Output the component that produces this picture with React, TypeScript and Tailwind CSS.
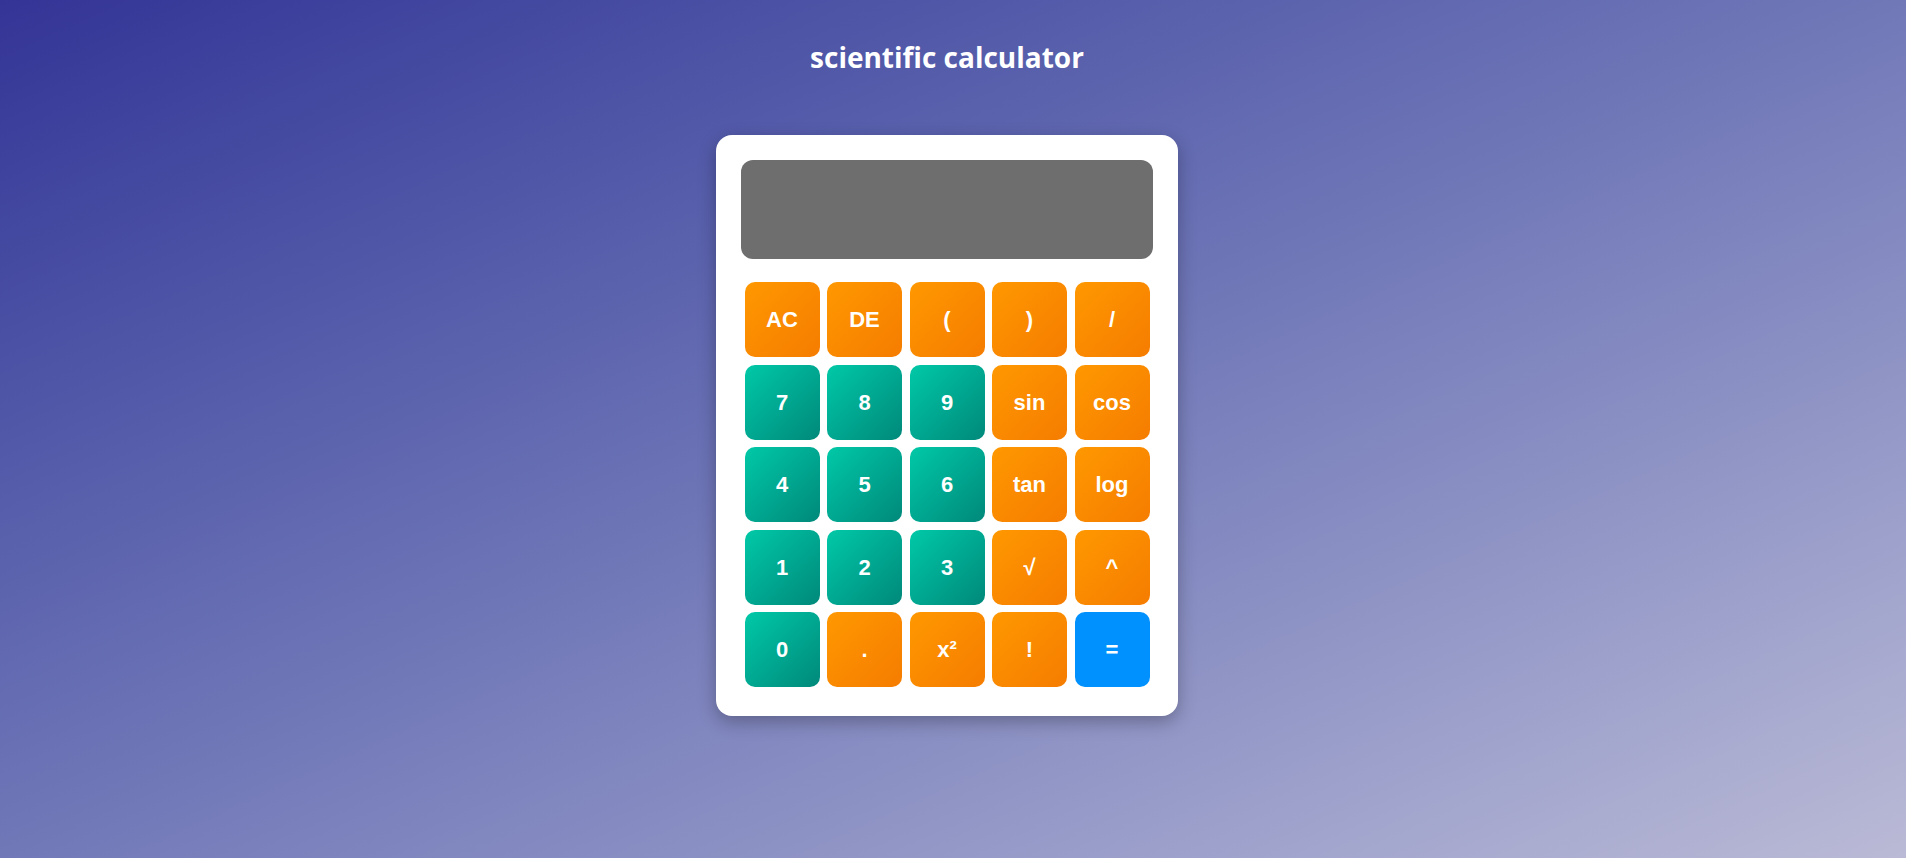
import React, { useState } from "react";

type Key = { label: string; kind: "op" | "num" | "eq" };

const keys: Key[] = [
  { label: "AC", kind: "op" },
  { label: "DE", kind: "op" },
  { label: "(", kind: "op" },
  { label: ")", kind: "op" },
  { label: "/", kind: "op" },
  { label: "7", kind: "num" },
  { label: "8", kind: "num" },
  { label: "9", kind: "num" },
  { label: "sin", kind: "op" },
  { label: "cos", kind: "op" },
  { label: "4", kind: "num" },
  { label: "5", kind: "num" },
  { label: "6", kind: "num" },
  { label: "tan", kind: "op" },
  { label: "log", kind: "op" },
  { label: "1", kind: "num" },
  { label: "2", kind: "num" },
  { label: "3", kind: "num" },
  { label: "√", kind: "op" },
  { label: "^", kind: "op" },
  { label: "0", kind: "num" },
  { label: ".", kind: "op" },
  { label: "x²", kind: "op" },
  { label: "!", kind: "op" },
  { label: "=", kind: "eq" },
];

const kindClass = {
  op: "bg-gradient-to-br from-[#ff9800] to-[#f57c00]",
  num: "bg-gradient-to-br from-[#00c9a7] to-[#00897b]",
  eq: "bg-[#0091ff]",
};

export default function App() {
  const [display, setDisplay] = useState("");

  const press = (label: string) => {
    if (label === "AC") return setDisplay("");
    if (label === "DE") return setDisplay((d) => d.slice(0, -1));
    if (label === "=") {
      try {
        // eslint-disable-next-line no-new-func
        const result = Function(`return (${display.replace(/\^/g, "**")})`)();
        setDisplay(String(result));
      } catch {
        setDisplay("Error");
      }
      return;
    }
    setDisplay((d) => d + label);
  };

  return (
    <div className="min-h-screen w-full bg-gradient-to-br from-[#343496] to-[#babad6] pr-3">
      <div className="flex flex-col items-center">
        <h1 className="mt-[40px] text-[28px] leading-[34px] font-bold text-white font-['Open_Sans',sans-serif]">
          scientific calculator
        </h1>

        {/* Calculator body */}
        <div className="mt-[61px] w-[462px] bg-white rounded-[16px] px-[25px] pt-[25px] pb-[29px] shadow-[0_6px_18px_rgba(0,0,0,0.28)]">
          <div className="h-[99px] rounded-[12px] bg-[#6e6e6e] px-4 flex items-center justify-end text-white text-[32px] font-['Liberation_Sans',sans-serif] overflow-hidden">
            {display}
          </div>

          <div className="mt-[23px] grid grid-cols-[repeat(5,75px)] gap-[7.5px] justify-center">
            {keys.map((k) => (
              <button
                key={k.label}
                onClick={() => press(k.label)}
                className={`h-[75px] w-[75px] rounded-[10px] text-white text-[22px] font-bold font-['Liberation_Sans',Arial,sans-serif] flex items-center justify-center ${kindClass[k.kind]}`}
              >
                {k.label}
              </button>
            ))}
          </div>
        </div>
      </div>
    </div>
  );
}
